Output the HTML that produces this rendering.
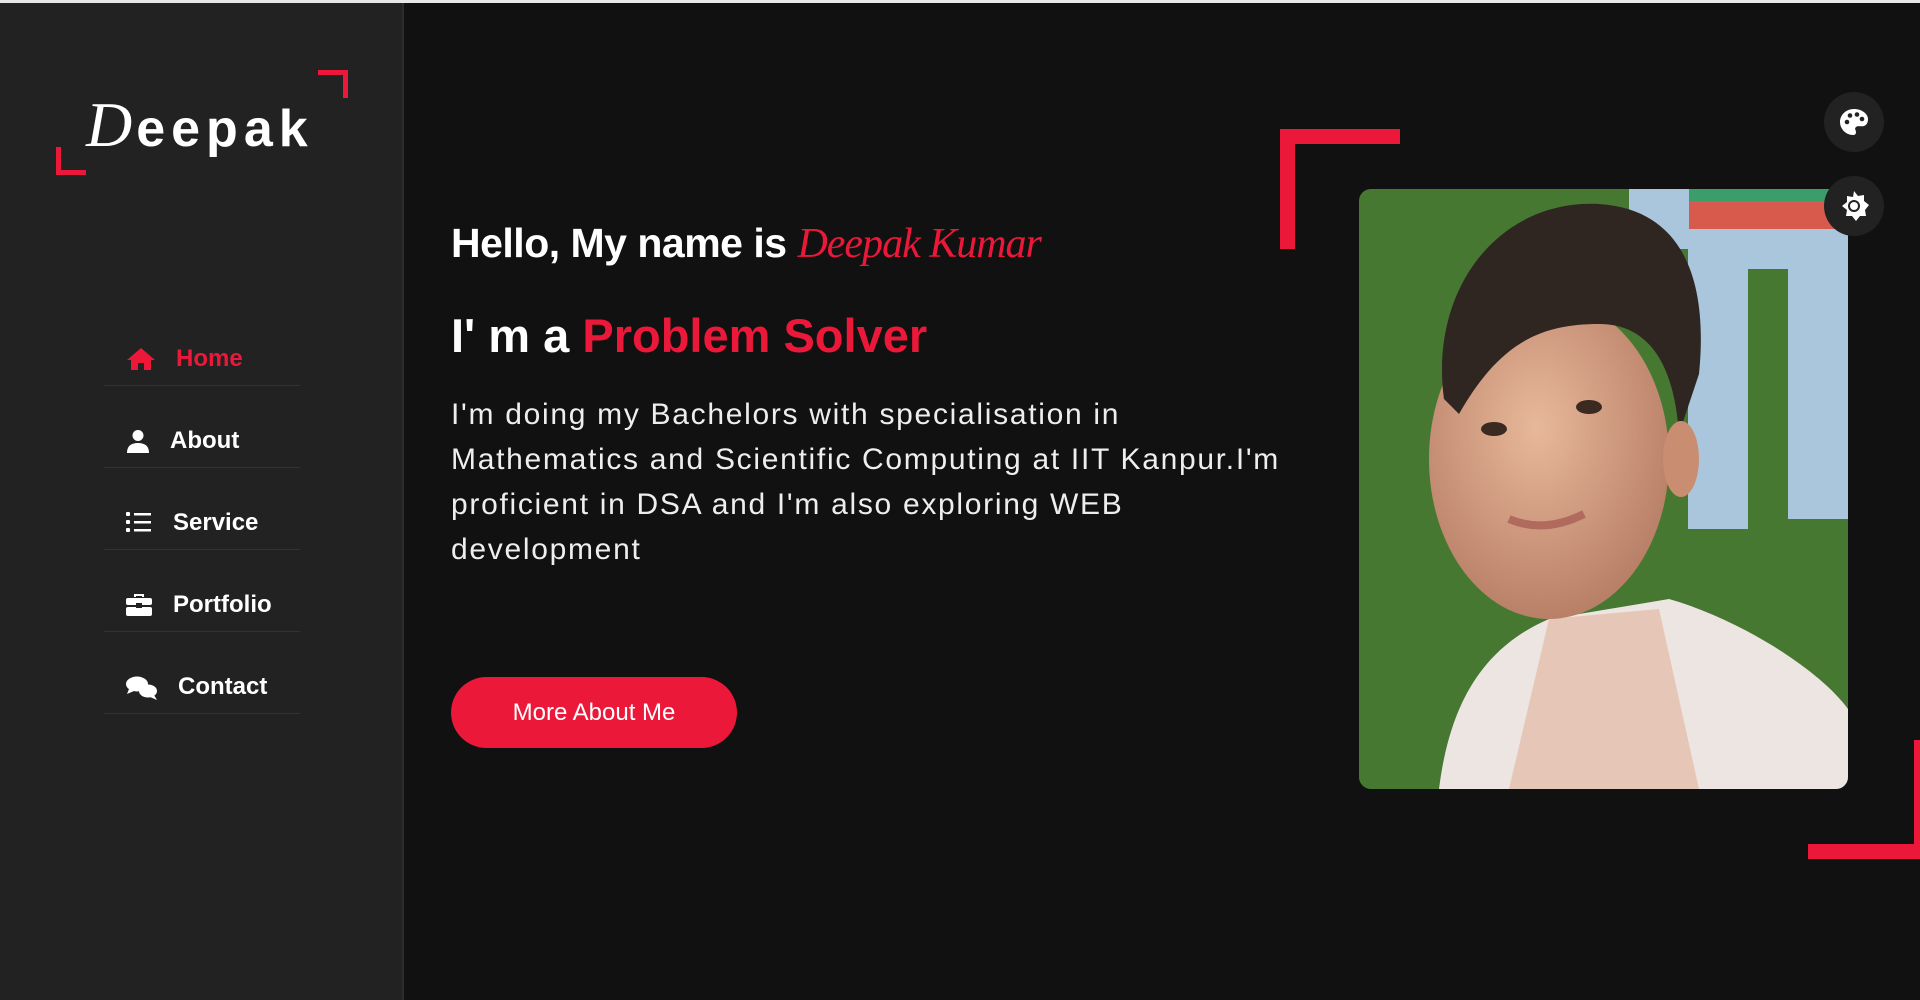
<!DOCTYPE html>
<html><head><meta charset="utf-8"><style>
*{margin:0;padding:0;box-sizing:border-box}
body{width:1920px;height:1000px;background:#111;overflow:hidden;font-family:"Liberation Sans",sans-serif;position:relative}
.top{position:absolute;left:0;top:0;width:1920px;height:3px;background:#e8e8e8}
.side{position:absolute;left:0;top:3px;width:404px;height:997px;background:#222;border-right:2px solid #2c2c2c}
.abs{position:absolute}
.logo{left:86px;top:88px;color:#fff;font-size:52px;font-weight:bold;letter-spacing:6px}
.logo i{font-family:"Liberation Serif",serif;font-weight:normal;font-size:64px;letter-spacing:4px}
.red{background:#ec1839}
.nav{left:104px;width:196px;height:82px;border-bottom:1.5px solid #333;color:#fff;font-size:24px;font-weight:bold}
.nav span{position:absolute;top:41px}
.nav svg{position:absolute;top:43px;left:22px}
h1{position:absolute;left:451px;top:220px;color:#fff;font-size:41px;font-weight:bold;letter-spacing:-0.5px}
h1 em{color:#ec1839;font-family:"Liberation Serif",serif;font-style:italic;font-weight:normal;font-size:42px;letter-spacing:-1px}
h2{position:absolute;left:451px;top:308px;color:#fff;font-size:47px;font-weight:bold;letter-spacing:0px}
h2 b{color:#ec1839}
p{position:absolute;left:451px;top:392px;width:900px;color:#eee;font-size:30px;line-height:45px;letter-spacing:1.7px;white-space:nowrap}
.btn{left:451px;top:677px;width:286px;height:71px;border-radius:36px;background:#ec1839;color:#fff;font-size:24px;text-align:center;line-height:71px}
.circ{width:60px;height:60px;border-radius:50%;background:#222;left:1824px}
</style></head><body>
<div class="top"></div>
<div class="side">
</div>
<div class="abs logo"><i>D</i>eepak</div>
<div class="abs red" style="left:318px;top:70px;width:30px;height:5px"></div>
<div class="abs red" style="left:343px;top:70px;width:5px;height:28px"></div>
<div class="abs red" style="left:56px;top:147px;width:5px;height:28px"></div>
<div class="abs red" style="left:56px;top:170px;width:30px;height:5px"></div>

<div class="abs nav" style="top:304px;color:#ec1839"><svg width="30" height="24" viewBox="0 0 30 24"><path d="M15 1L1 13h4v10h7v-7h6v7h7V13h4z" fill="#ec1839"/></svg><span style="left:72px">Home</span></div>
<div class="abs nav" style="top:386px"><svg width="24" height="24" viewBox="0 0 24 24"><circle cx="12" cy="6.5" r="5.5" fill="#fff"/><path d="M1 24c0-7 4-10 11-10s11 3 11 10z" fill="#fff"/></svg><span style="left:66px">About</span></div>
<div class="abs nav" style="top:468px"><svg width="26" height="22" viewBox="0 0 26 22"><g fill="#fff"><rect x="0" y="1" width="4" height="4" rx="1"/><rect x="0" y="9" width="4" height="4" rx="1"/><rect x="0" y="17" width="4" height="4" rx="1"/><rect x="8" y="2" width="17" height="2.5"/><rect x="8" y="10" width="17" height="2.5"/><rect x="8" y="18" width="17" height="2.5"/></g></svg><span style="left:69px">Service</span></div>
<div class="abs nav" style="top:550px"><svg width="26" height="24" viewBox="0 0 26 24"><g fill="#fff"><path d="M8 4V1h10v3h-2V3h-6v1z"/><rect x="0" y="5" width="26" height="7" rx="2"/><rect x="0" y="14" width="26" height="9" rx="2"/><rect x="10" y="10" width="6" height="5" fill="#222"/></g></svg><span style="left:69px">Portfolio</span></div>
<div class="abs nav" style="top:632px"><svg width="32" height="26" viewBox="0 0 32 26"><g fill="#fff"><ellipse cx="11" cy="9" rx="11" ry="7.5"/><path d="M3 14l-2 5 7-3z"/><ellipse cx="22" cy="16" rx="9" ry="6.5"/><path d="M28 20l3 5-7-3z"/></g></svg><span style="left:74px">Contact</span></div>

<h1>Hello, My name is <em>Deepak Kumar</em></h1>
<h2>I' m a <b>Problem Solver</b></h2>
<p>I'm doing my Bachelors with specialisation in<br>Mathematics and Scientific Computing at IIT Kanpur.I'm<br>proficient in DSA and I'm also exploring WEB<br>development</p>
<div class="abs btn">More About Me</div>

<div class="abs red" style="left:1280px;top:129px;width:120px;height:15px"></div>
<div class="abs red" style="left:1280px;top:129px;width:15px;height:120px"></div>
<div class="abs red" style="left:1808px;top:844px;width:112px;height:15px"></div>
<div class="abs red" style="left:1914px;top:740px;width:6px;height:119px"></div>

<svg class="abs" style="left:1359px;top:189px;border-radius:12px" width="489" height="600" viewBox="0 0 489 600">
<defs><radialGradient id="sk" cx="0.45" cy="0.4" r="0.6"><stop offset="0" stop-color="#e8b89a"/><stop offset="1" stop-color="#b98068"/></radialGradient></defs>
<rect width="489" height="600" fill="#3f6e2c"/>
<rect width="489" height="600" fill="#4d8236" opacity="0.5"/>
<path d="M270 0h219v330h-60V80h-40v260h-60V60h-59z" fill="#a9c6dd"/>
<rect x="330" y="0" width="150" height="40" fill="#d85a4c"/>
<rect x="330" y="0" width="150" height="12" fill="#3a9d6a"/>
<path d="M80 600c10-80 40-140 110-170l120-20c70 20 150 70 179 110v80z" fill="#ede5e2"/>
<path d="M150 600l40-170 110-10 40 180z" fill="#e6c6b6"/>
<ellipse cx="190" cy="270" rx="120" ry="160" fill="url(#sk)"/>
<path d="M85 210C70 100 140 10 240 15c80 5 110 70 100 170l-20 60c-5-70-30-110-80-110-60 0-100 20-140 90z" fill="#2f2622"/>
<ellipse cx="322" cy="270" rx="18" ry="38" fill="#c98d72"/>
<ellipse cx="135" cy="240" rx="13" ry="7" fill="#3a2a22"/>
<ellipse cx="230" cy="218" rx="13" ry="7" fill="#3a2a22"/>
<path d="M150 330q35 15 75 -5" stroke="#b06a5e" stroke-width="8" fill="none"/>
</svg>

<div class="abs circ" style="top:92px"><svg style="position:absolute;left:15px;top:15px" width="30" height="30" viewBox="0 0 30 30"><path d="M15 2C7 2 1 8 1 15s6 13 13 13c2 0 3-1 3-3s-2-3 0-5 5 0 8-1c3-1 4-4 4-7C29 7 23 2 15 2z" fill="#fff"/><g fill="#222"><circle cx="8" cy="15" r="2.3"/><circle cx="11" cy="8.5" r="2.3"/><circle cx="18" cy="7.5" r="2.3"/><circle cx="23" cy="12" r="2.3"/></g></svg></div>
<div class="abs circ" style="top:176px"><svg style="position:absolute;left:14px;top:14px" width="32" height="32" viewBox="0 0 32 32"><path d="M16 1l4 5 6-1 0 6 5 4-4 5 1 6-6 0-4 5-4-5-6 0 1-6-5-4 5-4 0-6 6 1z" fill="#fff"/><circle cx="16" cy="16" r="6" fill="#222"/><circle cx="16" cy="16" r="4" fill="#fff"/></svg></div>
</body></html>
